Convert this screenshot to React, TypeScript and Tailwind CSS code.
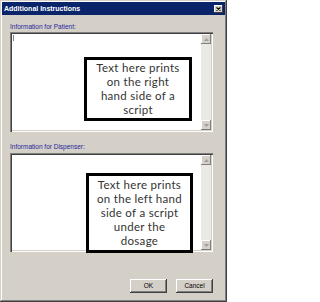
const ui = { fontFamily: '"Liberation Sans", Arial, sans-serif' };
const note = { fontFamily: 'Lato, "Open Sans", sans-serif' };

function ArrowUp() {
  return (
    <svg width="5" height="3" viewBox="0 0 5 3" className="block">
      <path d="M0 3 L2.5 0 L5 3 Z" fill="#a0a0a0" />
    </svg>
  );
}

function ArrowDown() {
  return (
    <svg width="5" height="3" viewBox="0 0 5 3" className="block">
      <path d="M0 0 L2.5 3 L5 0 Z" fill="#a0a0a0" />
    </svg>
  );
}

function ScrollButton({ down }: { down?: boolean }) {
  return (
    <div className="flex h-[10px] w-[10px] items-center justify-center bg-[#d4d0c8] shadow-[inset_-1px_-1px_#808080,inset_1px_1px_#ffffff]">
      {down ? <ArrowDown /> : <ArrowUp />}
    </div>
  );
}

function TextBox({ height, caret, children }: { height: string; caret?: boolean; children?: React.ReactNode }) {
  return (
    <div
      className={`relative flex ${height} bg-white p-[2px] shadow-[inset_1px_1px_#808080,inset_2px_2px_#404040,inset_-1px_-1px_#ffffff,inset_-2px_-2px_#d4d0c8]`}
    >
      <div className="relative flex-1">
        {caret ? <div className="absolute left-[1px] top-[1px] h-[6px] w-px bg-[#808080]" /> : null}
      </div>
      <div className="flex w-[10px] flex-col justify-between bg-[#ebe9e4]">
        <ScrollButton />
        <ScrollButton down />
      </div>
      {children}
    </div>
  );
}

function Note({ className, lines }: { className: string; lines: string[] }) {
  return (
    <div
      className={`absolute flex flex-col items-center justify-center border-[3px] border-black bg-white text-[11.5px] leading-[14px] tracking-[0.3px] text-[#333333] ${className}`}
      style={note}
    >
      {lines.map((line) => (
        <span key={line} className="whitespace-nowrap">
          {line}
        </span>
      ))}
    </div>
  );
}

function PushButton({ label }: { label: string }) {
  return (
    <button
      type="button"
      className="flex h-[14px] w-[37px] items-center justify-center bg-[#d4d0c8] text-[6.5px] text-black shadow-[inset_-1px_-1px_#404040,inset_1px_1px_#ffffff,inset_-2px_-2px_#808080]"
    >
      {label}
    </button>
  );
}

export default function App() {
  return (
    <div
      className="relative flex h-[302px] w-[227px] flex-col bg-[#d4d0c8] p-[2px] shadow-[inset_-1px_-1px_#404040,inset_1px_1px_#d4d0c8,inset_-2px_-2px_#808080,inset_2px_2px_#ffffff]"
      style={ui}
    >
      <div className="flex h-[13px] items-center justify-between bg-[#0a246a] pl-[2px] pr-[2px]">
        <span className="text-[7px] font-bold leading-none text-white">Additional Instructions</span>
        <div className="flex h-[8px] w-[9px] items-center justify-center bg-[#d4d0c8] shadow-[inset_-1px_-1px_#404040,inset_1px_1px_#ffffff]">
          <svg width="5" height="4" viewBox="0 0 5 4" className="block">
            <path d="M0.5 0.5 L4.5 3.5 M4.5 0.5 L0.5 3.5" stroke="#000" strokeWidth="1.1" />
          </svg>
        </div>
      </div>

      <div className="flex flex-1 flex-col pl-[8px] pr-[12px]">
        <div className="mt-[6px] h-[11px] text-[6.5px] leading-[11px] text-[#26269a]">Information for Patient:</div>
        <TextBox height="h-[100px]" caret>
          <Note className="left-[74px] top-[25px] h-[64px] w-[108px]" lines={['Text here prints', 'on the right', 'hand side of a', 'script']} />
        </TextBox>
        <div className="mt-[9px] h-[12px] text-[6.5px] leading-[11px] text-[#26269a]">Information for Dispenser:</div>
        <TextBox height="h-[99px]">
          <Note
            className="left-[76px] top-[20px] h-[80px] w-[107px]"
            lines={['Text here prints', 'on the left hand', 'side of a script', 'under the', 'dosage']}
          />
        </TextBox>
        <div className="mt-[27px] flex justify-end gap-[9px]">
          <PushButton label="OK" />
          <PushButton label="Cancel" />
        </div>
      </div>
    </div>
  );
}
